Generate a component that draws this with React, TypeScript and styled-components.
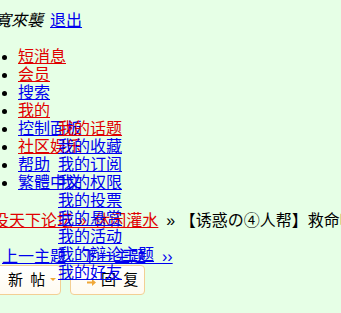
import React from "react";
import styled, { createGlobalStyle } from "styled-components";

const GlobalStyle = createGlobalStyle`
  html, body {
    margin: 0;
    padding: 0;
    background: #e6ffe6;
    overflow: hidden;
  }
  body {
    font-family: "Liberation Sans", "Noto Sans CJK SC", sans-serif;
    font-size: 16px;
    color: #000;
  }
`;

const Page = styled.div`
  padding-top: 12px;
  width: 341px;
  height: 313px;
  box-sizing: border-box;
  overflow: hidden;
`;

const TopBar = styled.div`
  display: flex;
  align-items: center;
  gap: 7px;
  line-height: 18px;
  white-space: nowrap;
`;

const Welcome = styled.em`
  margin-left: -5px;
  font-style: italic;
`;

const Link = styled.a<{ $tone?: "red" | "blue" }>`
  color: ${(p) => (p.$tone === "red" ? "#e00000" : "#0000ee")};
  text-decoration: underline;
  cursor: pointer;
`;

const MainList = styled.ul`
  margin: 18px 0 0;
  padding-left: 18px;
  line-height: 18px;
  list-style: disc;
`;

const MainItem = styled.li`
  position: relative;
  white-space: nowrap;
`;

const SubMenu = styled.ul`
  position: absolute;
  top: 18px;
  left: 40px;
  margin: 0;
  padding: 0;
  list-style: none;
  line-height: 18px;
  z-index: 5;
`;

const SubItem = styled.li`
  white-space: nowrap;
`;

const Breadcrumb = styled.div`
  margin: 20px 0 0 -7px;
  line-height: 18px;
  white-space: nowrap;
`;

const Title = styled.span`
  margin-left: 8px;
`;

const NavLine = styled.div`
  margin: 18px 0 0 2px;
  line-height: 18px;
  white-space: nowrap;
`;

const ButtonRow = styled.div`
  display: flex;
  gap: 9px;
  margin: -1px 0 0 -8px;
`;

const Button = styled.div<{ $w: number }>`
  width: ${(p) => p.$w}px;
  height: 30px;
  box-sizing: border-box;
  border: 1px solid #f3cf94;
  border-radius: 4px;
  background: linear-gradient(#ffffff, #fffbf0);
  display: flex;
  align-items: center;
  font-size: 15px;
  line-height: 18px;
  white-space: nowrap;
  word-spacing: 3px;
`;

const NewLabel = styled.span`
  margin-left: 15px;
`;

const Caret = styled.svg`
  margin-left: 5px;
`;

const Arrow = styled.svg`
  margin: 4px 0 0 16px;
`;

const ReplyLabel = styled.span`
  margin-left: 5px;
`;

const mainItems: { label: string; tone: "red" | "blue" }[] = [
  { label: "短消息", tone: "red" },
  { label: "会员", tone: "red" },
  { label: "搜索", tone: "blue" },
  { label: "我的", tone: "red" },
  { label: "控制面板", tone: "blue" },
  { label: "社区娱乐", tone: "red" },
  { label: "帮助", tone: "blue" },
  { label: "繁體中文", tone: "blue" },
];

const subItems = [
  "我的话题",
  "我的收藏",
  "我的订阅",
  "我的权限",
  "我的投票",
  "我的悬赏",
  "我的活动",
  "我的辩论主题",
  "我的好友",
];

export default function App() {
  return (
    <Page>
      <GlobalStyle />
      <TopBar>
        <Welcome>寬來襲</Welcome>
        <Link $tone="blue">退出</Link>
      </TopBar>
      <MainList>
        {mainItems.map((it) => (
          <MainItem key={it.label}>
            <Link $tone={it.tone}>{it.label}</Link>
            {it.label === "我的" && (
              <SubMenu>
                {subItems.map((s, i) => (
                  <SubItem key={s}>
                    <Link $tone={i === 0 ? "red" : "blue"}>{s}</Link>
                  </SubItem>
                ))}
              </SubMenu>
            )}
          </MainItem>
        ))}
      </MainList>
      <Breadcrumb>
        <Link $tone="red">{"没天下论坛 »\u2002休闲灌水"}</Link>
        <Title>» 【诱惑の④人帮】救命啊</Title>
      </Breadcrumb>
      <NavLine>
        <Link $tone="blue">{"上一主题　下一主题　››"}</Link>
      </NavLine>
      <ButtonRow>
        <Button $w={69}>
          <NewLabel>新 帖</NewLabel>
          <Caret width="6" height="4" viewBox="0 0 6 4">
            <path d="M0 0 L6 0 L3 3 Z" fill="#f0a838" />
          </Caret>
        </Button>
        <Button $w={75}>
          <Arrow width="9" height="7" viewBox="0 0 9 7">
            <path d="M0 2.5 H5 V0 L9 3.5 L5 7 V4.5 H0 Z" fill="#f0a838" />
          </Arrow>
          <ReplyLabel>回 复</ReplyLabel>
        </Button>
      </ButtonRow>
    </Page>
  );
}
